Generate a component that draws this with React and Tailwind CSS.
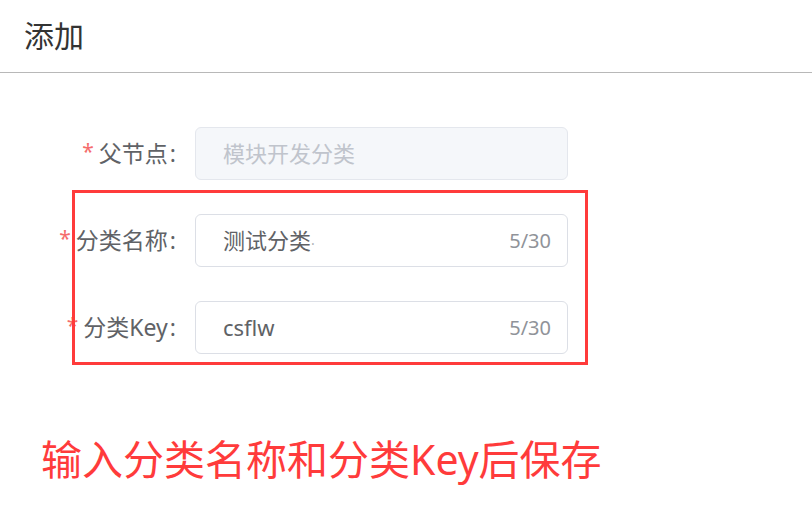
import React from 'react';

const font = { fontFamily: '"Noto Sans", "Noto Sans CJK SC", sans-serif' };

const rows = [
    { label: '父节点', value: '模块开发分类', disabled: true },
    { label: '分类名称', value: '测试分类', count: '5/30', cursor: true },
    { label: '分类Key', value: 'csflw', count: '5/30' },
];

const FormRow = ({ row }) => (
    <div className="flex items-center h-[53px]">
        <label className="w-[195px] pr-[19px] flex justify-end items-center text-[23px] text-[#606266] whitespace-nowrap">
            <span className="text-[#f56c6c] text-[21px] mr-[5px] -mt-[4px]">*</span>
            {row.label}
            <span className="ml-[2px]">:</span>
        </label>
        <div
            className={
                'w-[373px] h-[53px] rounded-[6px] border flex items-center pl-[27px] pr-[16px] ' +
                (row.disabled ? 'bg-[#f5f7fa] border-[#e4e7ed] text-[#c0c4cc]' : 'bg-white border-[#dcdfe6] text-[#606266]')
            }
        >
            <span className="flex-1 text-[22px]">
                {row.value}
                {row.cursor && <span className="text-[#b0b3b8] text-[14px]">·</span>}
            </span>
            {row.count && <span className="text-[20px] text-[#909399]">{row.count}</span>}
        </div>
    </div>
);

export default function App() {
    return (
        <div className="relative w-[812px] h-[531px] bg-white overflow-hidden" style={font}>
            <div className="h-[73px] flex items-center pl-[24px] border-b border-[#b8b8b8]">
                <h1 className="text-[30px] text-[#333333] -mt-[1px]">添加</h1>
            </div>

            <div className="pt-[54px] flex flex-col gap-[34px]">
                {rows.map((row) => (
                    <FormRow key={row.label} row={row} />
                ))}
            </div>

            {/* annotation box */}
            <div className="absolute left-[72px] top-[190px] w-[516px] h-[175px] border-[3px] border-[#ff3b3b]" />

            <p className="mt-[85px] pl-[41px] text-[41px] leading-none text-[#ff3b3b] whitespace-nowrap">
                输入分类名称和分类Key后保存
            </p>
        </div>
    );
}
